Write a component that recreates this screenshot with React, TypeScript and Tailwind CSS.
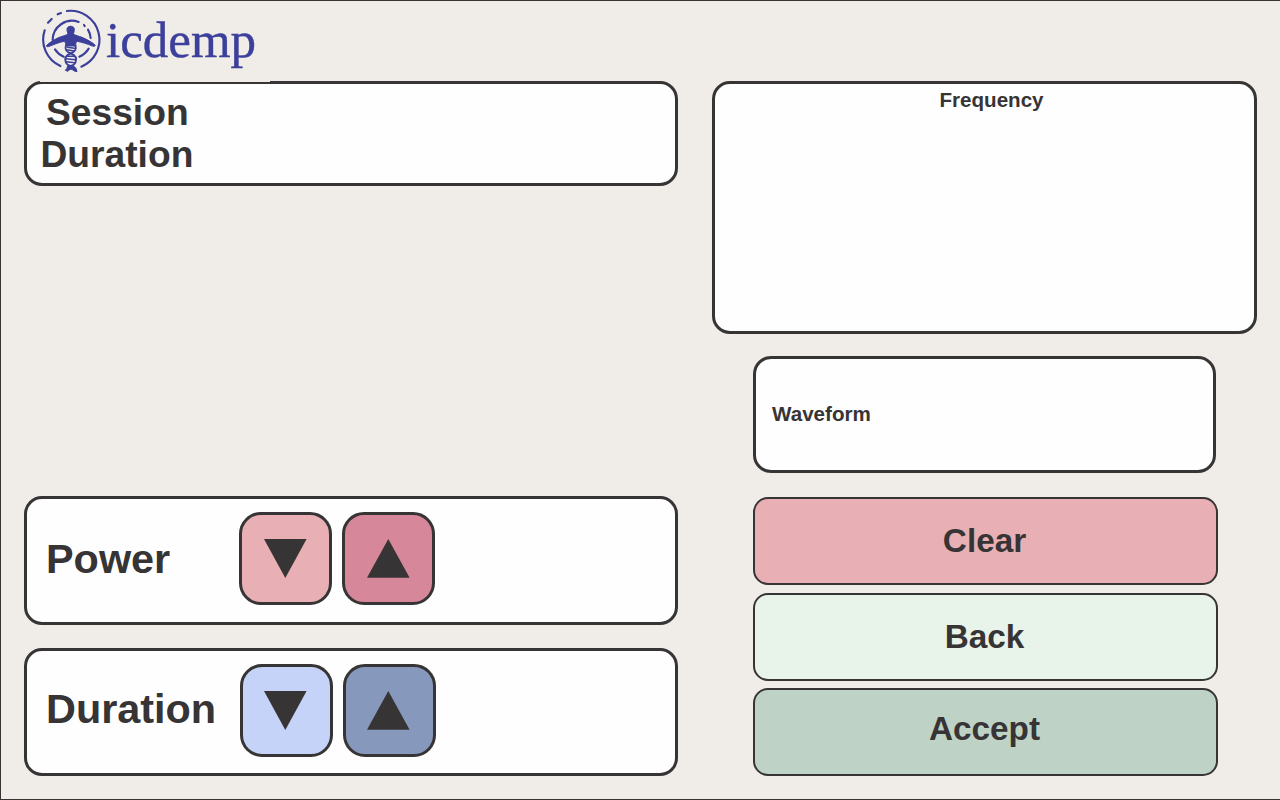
import type { ReactNode } from "react";

const INK = "#373435";

function Emblem() {
  return (
    <svg className="block h-[66px] w-[64px] shrink-0" viewBox="30 24 192 198" fill="none" stroke="#3c409b" strokeLinecap="round">
      <g strokeWidth="6.5">
        <path d="M111 33A87 87 0 0 1 154 200" />
        <path d="M44 91A87 87 0 0 0 91 198" />
        <path d="M83 43L93 39M54 68L65 57" />
        <path d="M68 120A58 58 0 0 1 146 66" />
        <path d="M162 75L164 78M174 89A58 58 0 0 1 182 114" />
        <path d="M176 146A58 58 0 0 1 148 170M75 148A58 58 0 0 0 101 170" />
      </g>
      <path
        fill="#3c409b"
        strokeWidth="3"
        d="M122 79C131 79 134 84 133 91C132 97 131 99 130 102C137 107 146 108 156 112C172 119 187 127 196 136C195 139 192 140 187 138C171 131 155 127 142 124C137 128 136 132 138 138H106C108 132 107 128 102 124C88 127 75 132 58 139C53 141 49 140 49 137C58 128 72 119 88 112C98 108 107 107 114 102C113 99 112 97 111 91C110 84 113 79 122 79Z"
      />
      <g strokeWidth="5.5">
        <path d="M108 136C104 147 108 155 122 160C137 166 141 175 137 186C134 194 128 197 122 198" />
        <path d="M136 136C140 147 136 155 122 160C107 166 103 175 107 186C110 194 116 197 122 198" />
      </g>
      <g strokeWidth="4.5">
        <path d="M112 142L133 145M110 149L132 153M113 169H131M107 176L136 179M109 185L134 188" />
      </g>
      <path fill="#3c409b" strokeWidth="3" d="M114 197L130 197L138 205L141 215L133 213L127 209C122 206 117 209 114 214L106 211L110 206Z" />
    </svg>
  );
}

function Panel({ className, children }: { className: string; children?: ReactNode }) {
  return <section className={`flex rounded-[18px] border-[3px] border-[#373435] bg-[#fefefe] ${className}`}>{children}</section>;
}

function StepButton({ up, className }: { up?: boolean; className: string }) {
  return (
    <button
      aria-label={up ? "Increase" : "Decrease"}
      className={`flex h-[93px] w-[93px] shrink-0 items-start justify-center rounded-[22px] border-[3px] border-[#373435] pt-[23px] ${className}`}
    >
      <svg className="block h-10 w-11" viewBox="0 0 44 40">
        <path d={up ? "M21.3 1L42.6 39.7H0Z" : "M0 1H42.6L21.3 39.9Z"} fill={INK} />
      </svg>
    </button>
  );
}

function ActionButton({ label, className }: { label: string; className: string }) {
  return (
    <button className={`flex h-[88px] w-full items-start justify-center rounded-[15px] border-2 border-[#373435] pr-[2px] text-[33.3px] leading-none font-bold ${className}`}>
      {label}
    </button>
  );
}

export default function App() {
  return (
    <main className="flex h-[800px] w-[1280px] overflow-hidden border-t border-b border-l border-[#373435] bg-[#f0ede8] font-['Liberation_Sans',Arial,sans-serif] text-[#373435]">
      <div className="flex w-[677px] flex-col pl-[23px]">
        <header className="z-10 -mb-px ml-4 flex h-[81px] w-[230px] shrink-0 bg-[#f0ede8] pt-[7px]">
          <Emblem />
          <span className="mt-[2px] ml-[2px] font-['Liberation_Serif','Times_New_Roman',serif] text-[51px] leading-[60px] text-[#3c409b] [-webkit-text-stroke:0.4px_#3c409b]">
            icdemp
          </span>
        </header>
        <Panel className="h-[105px] w-[654px] shrink-0 flex-col pt-[7px] text-[37.2px] leading-[42px] font-bold">
          <span className="pl-[19px]">Session</span>
          <span className="pl-[13.5px]">Duration</span>
        </Panel>
        <Panel className="mt-[310px] h-[129px] w-[654px] shrink-0 pt-[13px]">
          <h2 className="w-[212px] shrink-0 pt-[27px] pl-[19px] text-[41.4px] leading-none font-bold">Power</h2>
          <StepButton className="bg-[#e8afb5]" />
          <StepButton up className="ml-[10px] bg-[#d6879a]" />
        </Panel>
        <Panel className="mt-[23px] h-[128px] w-[654px] shrink-0 pt-[13px]">
          <h2 className="w-[212.5px] shrink-0 pt-[25px] pl-[19px] text-[41.4px] leading-none font-bold">Duration</h2>
          <StepButton className="bg-[#c4d3f7]" />
          <StepButton up className="ml-[10px] bg-[#8698bc]" />
        </Panel>
      </div>

      <div className="ml-[34px] flex w-[545px] flex-col pt-[80px]">
        <Panel className="h-[253px] w-full shrink-0 justify-center pt-[6px] pr-0 pl-[14px] text-[20.6px] leading-none font-bold">Frequency</Panel>
        <Panel className="mt-[22px] ml-[41px] h-[117px] w-[463px] shrink-0 items-start pt-[45px] pl-[16px] text-[20.6px] leading-none font-bold">
          Waveform
        </Panel>
        <div className="mt-6 ml-[41px] flex w-[465px] flex-col gap-[7.5px]">
          <ActionButton label="Clear" className="bg-[#e8afb5] pt-[25px]" />
          <ActionButton label="Back" className="bg-[#e8f3e9] pt-[25px]" />
          <ActionButton label="Accept" className="bg-[#bfd2c6] pt-[22px]" />
        </div>
      </div>
    </main>
  );
}
